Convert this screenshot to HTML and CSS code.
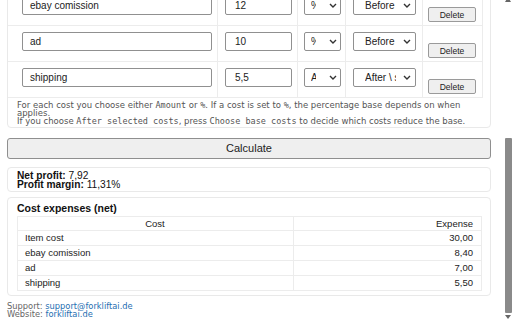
FILE: index.html
```html
<!DOCTYPE html>
<html>
<head>
<meta charset="utf-8">
<link rel="stylesheet" href="styles.css">
</head>
<body>
<div class="page">
  <div class="card costs-card">
    <div class="cost-rows">
      <div class="row">
        <div class="cell c-name"><div class="input name-input">ebay comission</div></div>
        <div class="cell c-val"><div class="input val-input">12</div></div>
        <div class="cell c-type"><div class="select sel-type"><span class="sv">%</span><svg class="chev" viewBox="0 0 8 5" width="8" height="5"><path d="M1 1 L4 4 L7 1" fill="none" stroke="#333" stroke-width="1.4"/></svg></div></div>
        <div class="cell c-base"><div class="select sel-base"><span class="sv">Before selected costs</span><svg class="chev" viewBox="0 0 8 5" width="8" height="5"><path d="M1 1 L4 4 L7 1" fill="none" stroke="#333" stroke-width="1.4"/></svg></div></div>
        <div class="cell c-del"><button class="del">Delete</button></div>
      </div>
      <div class="row">
        <div class="cell c-name"><div class="input name-input">ad</div></div>
        <div class="cell c-val"><div class="input val-input">10</div></div>
        <div class="cell c-type"><div class="select sel-type"><span class="sv">%</span><svg class="chev" viewBox="0 0 8 5" width="8" height="5"><path d="M1 1 L4 4 L7 1" fill="none" stroke="#333" stroke-width="1.4"/></svg></div></div>
        <div class="cell c-base"><div class="select sel-base"><span class="sv">Before selected costs</span><svg class="chev" viewBox="0 0 8 5" width="8" height="5"><path d="M1 1 L4 4 L7 1" fill="none" stroke="#333" stroke-width="1.4"/></svg></div></div>
        <div class="cell c-del"><button class="del">Delete</button></div>
      </div>
      <div class="row">
        <div class="cell c-name"><div class="input name-input">shipping</div></div>
        <div class="cell c-val"><div class="input val-input">5,5</div></div>
        <div class="cell c-type"><div class="select sel-type"><span class="sv">Amount</span><svg class="chev" viewBox="0 0 8 5" width="8" height="5"><path d="M1 1 L4 4 L7 1" fill="none" stroke="#333" stroke-width="1.4"/></svg></div></div>
        <div class="cell c-base"><div class="select sel-base"><span class="sv">After \ selected costs</span><svg class="chev" viewBox="0 0 8 5" width="8" height="5"><path d="M1 1 L4 4 L7 1" fill="none" stroke="#333" stroke-width="1.4"/></svg></div></div>
        <div class="cell c-del"><button class="del">Delete</button></div>
      </div>
    </div>
    <div class="help">
      <p>For each cost you choose either <code>Amount</code> or <code>%</code>. If a cost is set to <code>%</code>, the percentage base depends on when applies.</p>
      <p>If you choose <code>After selected costs</code>, press <code>Choose base costs</code> to decide which costs reduce the base.</p>
    </div>
  </div>

  <button class="calc">Calculate</button>

  <div class="card result">
    <div class="res-line"><strong>Net profit:</strong> 7,92</div>
    <div class="res-line"><strong>Profit margin:</strong> 11,31%</div>
  </div>

  <div class="card expenses">
    <div class="exp-title">Cost expenses (net)</div>
    <table class="exp-table">
      <thead><tr><th class="t-cost">Cost</th><th class="t-exp">Expense</th></tr></thead>
      <tbody>
        <tr><td>Item cost</td><td class="num">30,00</td></tr>
        <tr><td>ebay comission</td><td class="num">8,40</td></tr>
        <tr><td>ad</td><td class="num">7,00</td></tr>
        <tr><td>shipping</td><td class="num">5,50</td></tr>
      </tbody>
    </table>
  </div>

  <div class="footer">
    <div>Support: <a href="#">support@forkliftai.de</a></div>
    <div>Website: <a href="#">forkliftai.de</a></div>
  </div>
</div>

<div class="scrollbar">
  <div class="sb-up"></div>
  <div class="sb-thumb"></div>
  <div class="sb-down"></div>
</div>
</body>
</html>
```

FILE: styles.css
```css
* { box-sizing: border-box; }
html, body { margin: 0; padding: 0; background: #fff; overflow: hidden; }
body {
  font-family: "Liberation Sans", Arial, sans-serif;
  color: #222;
  font-size: 10px;
}
.page {
  width: 484px;
  margin: -11px 0 0 7px;
}
.card {
  border: 1px solid #e9e9e9;
  border-radius: 4px;
  background: #fff;
}
.costs-card {
  padding: 0 7px 1px 0;
}
.row {
  display: grid;
  grid-template-columns: 210px 80px 48px 77px 60px;
  height: 36px;
  border-bottom: 1px solid #ececec;
}
.cell {
  border-right: 1px solid #ececec;
  padding-top: 6px;
}
.c-name { padding-left: 14px; }
.c-val { padding-left: 7px; }
.c-type { padding-left: 6px; }
.c-base { padding-left: 7px; }
.c-del { padding-left: 5px; }

.input, .select {
  height: 19px;
  border: 1px solid #909090;
  border-radius: 2px;
  background: #fff;
  font-size: 10px;
  line-height: 17px;
  color: #222;
  white-space: nowrap;
  overflow: hidden;
}
.name-input { width: 190px; padding-left: 7px; }
.val-input { width: 67px; padding-left: 9px; }
.select {
  display: flex;
  align-items: center;
}
.sv { overflow: hidden; white-space: nowrap; display: block; }
.chev { display: block; margin-left: auto; flex: none; }
.sel-type { width: 37px; padding: 0 3px 0 6px; }
.sel-type .sv { width: 5px; }
.sel-base { width: 63px; padding: 0 4px 0 11px; }
.sel-base .sv { width: 31px; }

.del {
  display: block;
  margin-top: 11px;
  width: 48px;
  height: 15px;
  padding: 0;
  border: 1px solid #9a9a9a;
  border-radius: 2px;
  background: #efefef;
  font-family: "Liberation Sans", Arial, sans-serif;
  font-size: 8.5px;
  color: #222;
}

.help {
  margin-top: 3px;
  padding-left: 9px;
  padding-right: 8px;
  font-family: "DejaVu Sans", Verdana, sans-serif;
  font-size: 8.5px;
  line-height: 8.2px;
  color: #555;
}
.help p { margin: 0; }
.help code {
  font-family: "DejaVu Sans Mono", "Liberation Mono", monospace;
  font-size: 8.5px;
  line-height: 0;
}

.calc {
  display: block;
  width: 484px;
  height: 21px;
  margin-top: 10px;
  padding: 0;
  border: 1px solid #8f8f8f;
  border-radius: 3px;
  background: #efefef;
  font-family: "Liberation Sans", Arial, sans-serif;
  font-size: 11px;
  color: #222;
}

.result {
  margin-top: 8px;
  padding: 3px 9px 2px;
  font-size: 10.2px;
  color: #111;
}
.res-line { line-height: 9px; height: 9px; }

.expenses {
  margin-top: 5px;
  padding: 5px 8px 4px 9px;
}
.exp-title {
  font-weight: bold;
  font-size: 10.5px;
  line-height: 11px;
  color: #111;
}
.exp-table {
  margin-top: 2px;
  width: 100%;
  border-collapse: collapse;
  font-size: 9.5px;
}
.exp-table th, .exp-table td {
  border: 1px solid #ececec;
  padding: 1px 8px 1px 7px;
  line-height: 11.8px;
  font-weight: normal;
  color: #222;
}
.t-cost { width: 276px; text-align: center; }
.t-exp { text-align: right; }
.num { text-align: right; }

.footer {
  margin-top: 6px;
  font-family: "DejaVu Sans", Verdana, sans-serif;
  font-size: 8.3px;
  line-height: 8px;
  color: #666;
}
.footer a { color: #1f6fb2; text-decoration: none; }

.scrollbar {
  position: fixed;
  top: 0;
  right: 0;
  width: 8px;
  height: 320px;
}
.sb-up {
  position: absolute;
  top: -3px;
  left: 1px;
  width: 0; height: 0;
  border-left: 3px solid transparent;
  border-right: 3px solid transparent;
  border-bottom: 5px solid #666;
}
.sb-thumb {
  position: absolute;
  top: 138px;
  left: 1px;
  width: 7px;
  height: 175px;
  background: #8a8a8a;
  border-radius: 1px;
}
.sb-down {
  position: absolute;
  top: 315px;
  left: 1px;
  width: 0; height: 0;
  border-left: 3px solid transparent;
  border-right: 3px solid transparent;
  border-top: 4px solid #666;
}
```
